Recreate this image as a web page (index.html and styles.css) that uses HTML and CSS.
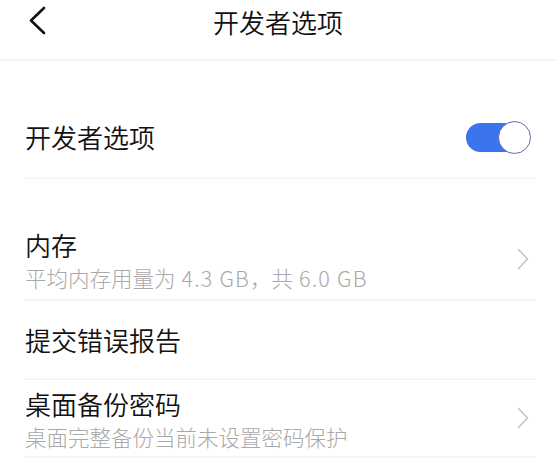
FILE: index.html
```html
<!DOCTYPE html>
<html lang="zh-CN">

<head>
    <meta charset="UTF-8">
    <meta name="viewport" content="width=device-width, initial-scale=1.0">
    <title>开发者选项</title>
    <link rel="stylesheet" href="styles.css">
</head>

<body>
    <div class="page">

        <!-- top bar -->
        <header class="topbar">
            <svg class="back" width="20" height="30" viewBox="0 0 20 30">
                <polyline points="16,2 3,14.5 16,27" fill="none" stroke="#111" stroke-width="2.6" stroke-linecap="round" stroke-linejoin="round" />
            </svg>
            <h1 class="title">开发者选项</h1>
        </header>

        <!-- master switch -->
        <section class="group">
            <div class="row">
                <div class="row-text">
                    <p class="row-title">开发者选项</p>
                </div>
                <div class="toggle on">
                    <span class="knob"></span>
                </div>
            </div>
        </section>

        <!-- options -->
        <section class="group group-second">
            <div class="row">
                <div class="row-text">
                    <p class="row-title">内存</p>
                    <p class="row-sub">平均内存用量为<span class="num"> 4.3 GB</span>，共<span class="num"> 6.0 GB</span></p>
                </div>
                <svg class="arrow" width="12" height="22" viewBox="0 0 12 22">
                    <polyline points="1.5,1.5 10.5,11 1.5,20.5" fill="none" stroke="#c4c4c4" stroke-width="1.6" stroke-linecap="round" stroke-linejoin="round" />
                </svg>
            </div>
            <div class="row row-single">
                <div class="row-text">
                    <p class="row-title">提交错误报告</p>
                </div>
            </div>
            <div class="row row-short">
                <div class="row-text">
                    <p class="row-title">桌面备份密码</p>
                    <p class="row-sub">桌面完整备份当前未设置密码保护</p>
                </div>
                <svg class="arrow" width="12" height="22" viewBox="0 0 12 22">
                    <polyline points="1.5,1.5 10.5,11 1.5,20.5" fill="none" stroke="#c4c4c4" stroke-width="1.6" stroke-linecap="round" stroke-linejoin="round" />
                </svg>
            </div>
        </section>

    </div>
</body>

</html>
```

FILE: styles.css
```css
body {
    margin: 0;
    background: #fff;
    font-family: "Noto Sans CJK SC", "Noto Sans", sans-serif;
    font-weight: 300;
    color: #111;
}

.page {
    width: 556px;
}

/* top bar */
.topbar {
    height: 59px;
    border-bottom: 2px solid #f6f6f6;
    display: flex;
    justify-content: center;
    position: relative;
}

.back {
    position: absolute;
    left: 28px;
    top: 6px;
}

.title {
    margin: 0;
    padding-top: 5px;
    font-size: 26px;
    line-height: 34px;
    font-weight: 350;
}

/* groups and rows */
.group {
    padding-top: 36px;
}

.group-second {
    padding-top: 40px;
}

.row {
    margin: 0 20px 0 24px;
    min-height: 80px;
    border-bottom: 2px solid #f6f6f6;
    display: flex;
    align-items: center;
    justify-content: space-between;
}

.row-single {
    min-height: 77px;
}

.row-short {
    min-height: 76px;
}

.row-text p {
    margin: 0;
}

.row-title {
    font-size: 26px;
    line-height: 34px;
    font-weight: 350;
    padding-left: 1px;
}

.row-sub {
    font-size: 21.5px;
    line-height: 26px;
    margin-top: 3px !important;
    color: #a9a9a9;
    padding-left: 1px;
}

.num {
    letter-spacing: 1.2px;
}

.arrow {
    margin-right: 7px;
}

/* switch */
.toggle {
    width: 65px;
    height: 33px;
    margin-right: 5px;
    position: relative;
    display: flex;
    align-items: center;
}

.toggle::before {
    content: "";
    width: 62px;
    height: 29px;
    border-radius: 15px;
    background: #3b74ef;
}

.knob {
    position: absolute;
    right: 0;
    top: 0;
    width: 31px;
    height: 31px;
    border-radius: 50%;
    background: #fff;
    border: 1px solid #5c6e9c;
}
```
